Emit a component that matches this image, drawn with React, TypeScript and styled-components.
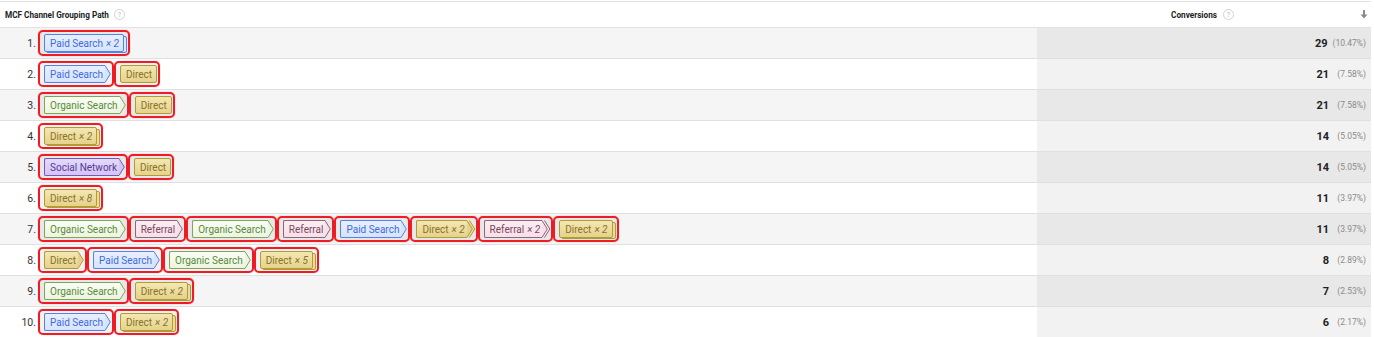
import styled, { createGlobalStyle } from "styled-components";

type Kind = "paid" | "direct" | "organic" | "social" | "referral";

interface Step {
  kind: Kind;
  count?: number;
}

interface PathRow {
  steps: Step[];
  conversions: number;
  percent: string;
}

const palette: Record<Kind, { label: string; top: string; bottom: string; fill: string; line: string; text: string }> = {
  paid: { label: "Paid Search", top: "#e8effe", bottom: "#d7e4fc", fill: "#dde8fd", line: "#5283ea", text: "#3f6bde" },
  direct: { label: "Direct", top: "#f3e7b2", bottom: "#e5d28d", fill: "#ecdb9b", line: "#b39b34", text: "#8a7226" },
  organic: { label: "Organic Search", top: "#f9fcf4", bottom: "#edf5e1", fill: "#f2f8e9", line: "#7ea55a", text: "#5a8a3c" },
  social: { label: "Social Network", top: "#e3d9f8", bottom: "#d4c5f2", fill: "#dacdf4", line: "#7658bd", text: "#55399c" },
  referral: { label: "Referral", top: "#fdedf4", bottom: "#f9dee9", fill: "#fbe4ed", line: "#8d6677", text: "#774a5c" },
};

const rows: PathRow[] = [
  { steps: [{ kind: "paid", count: 2 }], conversions: 29, percent: "10.47%" },
  { steps: [{ kind: "paid" }, { kind: "direct" }], conversions: 21, percent: "7.58%" },
  { steps: [{ kind: "organic" }, { kind: "direct" }], conversions: 21, percent: "7.58%" },
  { steps: [{ kind: "direct", count: 2 }], conversions: 14, percent: "5.05%" },
  { steps: [{ kind: "social" }, { kind: "direct" }], conversions: 14, percent: "5.05%" },
  { steps: [{ kind: "direct", count: 8 }], conversions: 11, percent: "3.97%" },
  {
    steps: [
      { kind: "organic" },
      { kind: "referral" },
      { kind: "organic" },
      { kind: "referral" },
      { kind: "paid" },
      { kind: "direct", count: 2 },
      { kind: "referral", count: 2 },
      { kind: "direct", count: 2 },
    ],
    conversions: 11,
    percent: "3.97%",
  },
  {
    steps: [{ kind: "direct" }, { kind: "paid" }, { kind: "organic" }, { kind: "direct", count: 5 }],
    conversions: 8,
    percent: "2.89%",
  },
  { steps: [{ kind: "organic" }, { kind: "direct", count: 2 }], conversions: 7, percent: "2.53%" },
  { steps: [{ kind: "paid" }, { kind: "direct", count: 2 }], conversions: 6, percent: "2.17%" },
];

const GlobalStyle = createGlobalStyle`
  body {
    margin: 0;
    background: #fff;
    font-family: Roboto, "Liberation Sans", Arial, sans-serif;
  }
`;

const Table = styled.div`
  width: 1371px;
  padding-top: 1px;
`;

const HeaderRow = styled.div`
  display: grid;
  grid-template-columns: 1037px 1fr;
  height: 25px;
  border-top: 1px solid #e2e2e2;
  border-bottom: 1px solid #e2e2e2;
  font-size: 8.2px;
  font-weight: 700;
  color: #222;
`;

const HeadLeft = styled.div`
  display: flex;
  align-items: center;
  gap: 5px;
  padding-left: 5px;
`;

const HeadRight = styled.div`
  display: grid;
  grid-template-columns: 1fr auto 1fr;
  align-items: center;
  padding-right: 3px;
`;

const HeadLabel = styled.div`
  grid-column: 2;
  display: flex;
  align-items: center;
  gap: 6px;
`;

const SortIcon = styled.svg`
  grid-column: 3;
  justify-self: end;
`;

const Help = styled.span`
  display: inline-flex;
  align-items: center;
  justify-content: center;
  width: 9px;
  height: 9px;
  border: 1px solid #d4d4d4;
  border-radius: 50%;
  font-size: 7px;
  font-weight: 400;
  color: #bbb;
`;

const Row = styled.div<{ $odd: boolean }>`
  display: grid;
  grid-template-columns: 1037px 1fr;
  height: 30px;
  border-bottom: 1px solid #e0e0e0;
  background: ${(p) => (p.$odd ? "#f5f5f5" : "#fff")};
`;

const PathCell = styled.div`
  display: flex;
  align-items: center;
`;

const Index = styled.span`
  width: 36px;
  margin-right: 2px;
  text-align: right;
  font-size: 10.5px;
  color: #333;
`;

const Marks = styled.div`
  display: flex;
  align-items: center;
`;

const Mark = styled.span`
  display: inline-flex;
  align-items: center;
  padding: 2px 1px 2px 4px;
  border: 2px solid #ee1c25;
  border-radius: 5px;
  background: rgba(0, 0, 0, 0.05);
  box-shadow: 0 0 1px rgba(200, 0, 0, 0.6);
`;

const Shape = styled.span<{ $kind: Kind; $stack: boolean }>`
  position: relative;
  z-index: 0;
  display: inline-flex;
  margin-right: ${(p) => (p.$stack ? "3px" : "0")};

  ${(p) =>
    p.$stack &&
    `
    &::before {
      content: "";
      position: absolute;
      top: 2px;
      left: 2px;
      right: -3px;
      bottom: -1px;
      border: 1px solid ${palette[p.$kind].line};
      border-radius: 2px;
      background: ${palette[p.$kind].fill};
      z-index: -1;
    }
  `}
`;

const Body = styled.span<{ $kind: Kind; $tip: boolean }>`
  display: inline-flex;
  align-items: center;
  box-sizing: border-box;
  height: 18px;
  padding: 0 ${(p) => (p.$tip ? "2px" : "4px")} 0 5px;
  border: 1px solid ${(p) => palette[p.$kind].line};
  border-right: ${(p) => (p.$tip ? "none" : `1px solid ${palette[p.$kind].line}`)};
  border-radius: ${(p) => (p.$tip ? "2px 0 0 2px" : "2px")};
  background: linear-gradient(${(p) => palette[p.$kind].top}, ${(p) => palette[p.$kind].bottom});
  font-size: 10px;
  color: ${(p) => palette[p.$kind].text};
  white-space: nowrap;
`;

const Count = styled.i`
  margin-left: 3px;
`;

const ValueCell = styled.div<{ $odd: boolean }>`
  display: flex;
  align-items: center;
  justify-content: flex-end;
  padding-right: 5px;
  background: ${(p) => (p.$odd ? "#e8e8e8" : "#f2f2f2")};
`;

const Total = styled.span`
  font-size: 11px;
  font-weight: 700;
  color: #222;
`;

const Share = styled.span`
  min-width: 32px;
  margin-left: 5px;
  text-align: right;
  font-size: 8.5px;
  color: #8a8a8a;
`;

const Tip = ({ kind, double }: { kind: Kind; double: boolean }) => {
  const c = palette[kind];
  return (
    <svg width={double ? 8 : 6} height={18} viewBox={`0 0 ${double ? 8 : 6} 18`}>
      {double && (
        <>
          <polygon points="0,0.5 2.5,0.5 7.8,9 2.5,17.5 0,17.5" fill={c.fill} />
          <polyline points="2.5,0.5 7.8,9 2.5,17.5" fill="none" stroke={c.line} strokeWidth={1} />
        </>
      )}
      <polygon points="0,0.5 5.3,9 0,17.5" fill={c.bottom} />
      <polyline points="0,0.5 5.3,9 0,17.5" fill="none" stroke={c.line} strokeWidth={1} />
    </svg>
  );
};

const Chip = ({ step, last }: { step: Step; last: boolean }) => {
  const multi = !!step.count && step.count > 1;
  return (
    <Mark>
      <Shape $kind={step.kind} $stack={last && multi}>
        <Body $kind={step.kind} $tip={!last}>
          {palette[step.kind].label}
          {multi && <Count>× {step.count}</Count>}
        </Body>
        {!last && <Tip kind={step.kind} double={multi} />}
      </Shape>
    </Mark>
  );
};

const App = () => {
  return (
    <>
      <GlobalStyle />
      <Table>
        <HeaderRow>
          <HeadLeft>
            MCF Channel Grouping Path <Help>?</Help>
          </HeadLeft>
          <HeadRight>
            <HeadLabel>
              Conversions <Help>?</Help>
            </HeadLabel>
            <SortIcon width="8" height="9" viewBox="0 0 8 9">
              <path d="M4 0v5" stroke="#8a8a8a" strokeWidth="2" />
              <path d="M0.5 4.5L4 8.5L7.5 4.5Z" fill="#8a8a8a" />
            </SortIcon>
          </HeadRight>
        </HeaderRow>
        {rows.map((row, i) => (
          <Row key={i} $odd={i % 2 === 0}>
            <PathCell>
              <Index>{i + 1}.</Index>
              <Marks>
                {row.steps.map((step, j) => (
                  <Chip key={j} step={step} last={j === row.steps.length - 1} />
                ))}
              </Marks>
            </PathCell>
            <ValueCell $odd={i % 2 === 0}>
              <Total>{row.conversions}</Total>
              <Share>({row.percent})</Share>
            </ValueCell>
          </Row>
        ))}
      </Table>
    </>
  );
};

export default App;
